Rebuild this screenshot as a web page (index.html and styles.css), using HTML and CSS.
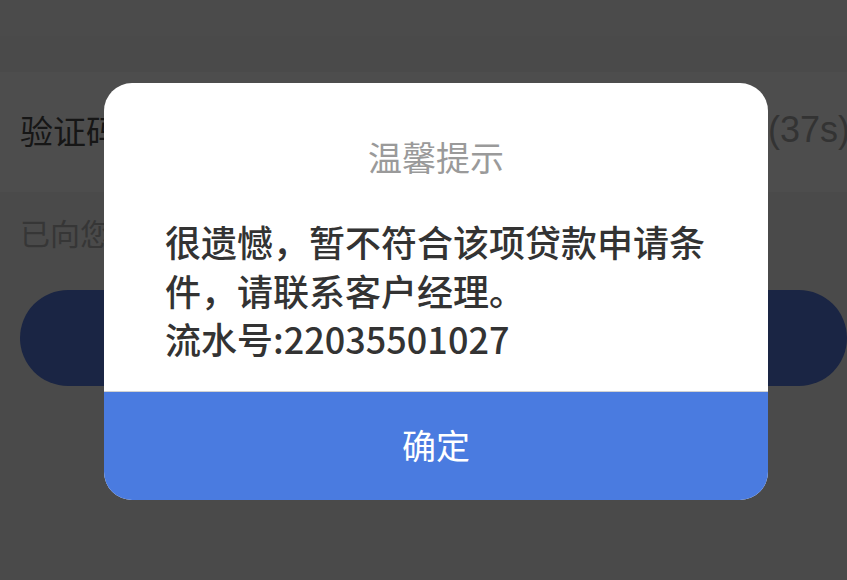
FILE: index.html
```html
<!DOCTYPE html>
<html lang="zh-CN">
<head>
<meta charset="utf-8">
<title>温馨提示</title>
<link rel="stylesheet" href="styles.css">
</head>
<body>
<div class="page">
  <div class="status-bar"></div>
  <div class="nav-bar"></div>
  <div class="code-row">
    <span class="code-label">验证码</span>
    <span class="code-timer">(37s)</span>
  </div>
  <div class="hint">已向您的手机发送验证码</div>
  <div class="submit-wrap"><div class="submit-btn"></div></div>
</div>
<div class="overlay">
  <div class="dialog">
    <div class="dialog-title">温馨提示</div>
    <div class="dialog-body">很遗憾，暂不符合该项贷款申请条件，请联系客户经理。<br>流水号:22035501027</div>
    <div class="dialog-btn">确定</div>
  </div>
</div>
</body>
</html>
```

FILE: styles.css
```css
* { box-sizing: border-box; }
html, body {
  margin: 0;
  padding: 0;
  width: 847px;
  height: 580px;
  overflow: hidden;
  font-family: "Noto Sans CJK SC", "Noto Sans", sans-serif;
  background: #4a4a4a;
}
.page {
  width: 847px;
  height: 580px;
  display: flex;
  flex-direction: column;
}
.status-bar { height: 36px; background: #4b4b4b; }
.nav-bar { height: 36px; background: #4a4a4a; }
.code-row {
  height: 120px;
  background: #4d4d4d;
  display: flex;
  align-items: center;
  justify-content: space-between;
  padding: 0 0 0 20px;
  margin-right: -3px;
}
.code-label {
  font-size: 33px;
  color: #161616;
  line-height: 1;
  margin-top: -4px;
}
.code-timer {
  font-family: "Liberation Sans", "Noto Sans", sans-serif;
  font-size: 36px;
  color: #333333;
  line-height: 1;
  margin-top: -4px;
}
.hint {
  padding: 20px 0 0 20px;
  height: 98px;
  font-size: 30px;
  line-height: 40px;
  color: #363636;
}
.submit-wrap { padding: 0 0 0 20px; }
.submit-btn {
  height: 96px;
  border-radius: 48px;
  background: #1a2544;
}
.overlay {
  position: absolute;
  left: 0;
  top: 0;
  width: 847px;
  height: 580px;
  padding: 83px 0 0 104px;
}
.dialog {
  width: 664px;
  height: 417px;
  background: #ffffff;
  border-radius: 28px;
  overflow: hidden;
  display: flex;
  flex-direction: column;
}
.dialog-title {
  padding-top: 50px;
  text-align: center;
  font-size: 34px;
  line-height: 48px;
  color: #9a9a9a;
}
.dialog-body {
  padding: 36px 61px 0 61px;
  font-size: 36px;
  font-weight: 500;
  line-height: 48.5px;
  color: #333333;
  flex: 1;
  border-bottom: 1px solid #d2d2d2;
}
.dialog-btn {
  height: 108px;
  background: #4a7be0;
  color: #ffffff;
  font-size: 34px;
  display: flex;
  align-items: center;
  justify-content: center;
  padding-bottom: 4px;
}
```
